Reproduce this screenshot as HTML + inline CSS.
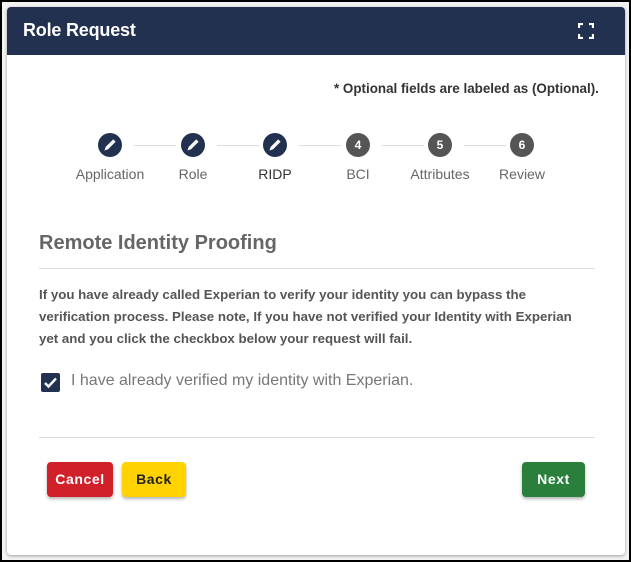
<!DOCTYPE html>
<html><head><style>
*{margin:0;padding:0;box-sizing:border-box}
body{width:631px;height:562px;background:#000;position:relative;overflow:hidden;font-family:"Liberation Sans",sans-serif}
.frame{position:absolute;left:2px;top:2px;width:627px;height:558px;background:#f3f3f3}
.card{position:absolute;left:7px;top:7px;width:618px;height:548px;background:#fff;border-radius:4px;box-shadow:0 1px 3px rgba(0,0,0,.35);overflow:hidden}
.hdr{position:absolute;left:0;top:0;width:100%;height:48px;background:#22314f}
.hdr h1{position:absolute;left:16px;top:13px;color:#fff;font-size:18px;font-weight:bold;letter-spacing:-0.2px}
.a{position:absolute;white-space:nowrap}
.c{position:absolute;width:24px;height:24px;border-radius:50%;top:126px;color:#fff;font-size:12px;font-weight:bold;text-align:center;line-height:24px}
.dk{background:#22314f}.gr{background:#555}
.ln{position:absolute;top:138px;height:1px;background:#ddd}
.lb{position:absolute;top:159px;font-size:14px;color:#666;transform:translateX(-50%)}
.btn{position:absolute;top:455px;height:35px;border-radius:4px;font-size:14px;font-weight:bold;text-align:center;line-height:35px;letter-spacing:.6px;box-shadow:0 2px 3px rgba(0,0,0,.3)}
</style></head><body>
<div class="frame"></div>
<div class="card">
 <div class="hdr"><h1>Role Request</h1>
  <svg style="position:absolute;left:571px;top:16px" width="16" height="16" viewBox="0 0 16 16" fill="none" stroke="#fff" stroke-width="2.2"><path d="M1 5V1h4M11 1h4v4M15 11v4h-4M5 15H1v-4"/></svg>
 </div>
 <div class="a" style="left:327px;top:74px;font-size:13.4px;font-weight:bold;color:#333">* Optional fields are labeled as (Optional).</div>

 <div class="ln" style="left:127px;width:42px"></div>
 <div class="ln" style="left:210px;width:42px"></div>
 <div class="ln" style="left:292px;width:42px"></div>
 <div class="ln" style="left:375px;width:42px"></div>
 <div class="ln" style="left:457px;width:42px"></div>

 <div class="c dk" style="left:91px"><svg width="24" height="24" viewBox="0 0 24 24"><path d="M6.5 17.5l1.2-3.6 7.5-7.5 2.4 2.4-7.5 7.5z" fill="#fff"/></svg></div>
 <div class="c dk" style="left:174px"><svg width="24" height="24" viewBox="0 0 24 24"><path d="M6.5 17.5l1.2-3.6 7.5-7.5 2.4 2.4-7.5 7.5z" fill="#fff"/></svg></div>
 <div class="c dk" style="left:256px"><svg width="24" height="24" viewBox="0 0 24 24"><path d="M6.5 17.5l1.2-3.6 7.5-7.5 2.4 2.4-7.5 7.5z" fill="#fff"/></svg></div>
 <div class="c gr" style="left:339px">4</div>
 <div class="c gr" style="left:421px">5</div>
 <div class="c gr" style="left:503px">6</div>

 <div class="lb" style="left:103px">Application</div>
 <div class="lb" style="left:186px">Role</div>
 <div class="lb" style="left:268px;color:#333">RIDP</div>
 <div class="lb" style="left:351px">BCI</div>
 <div class="lb" style="left:433px">Attributes</div>
 <div class="lb" style="left:515px">Review</div>

 <div class="a" style="left:32px;top:225px;font-size:20px;font-weight:bold;color:#666">Remote Identity Proofing</div>
 <div style="position:absolute;left:32px;top:261px;width:556px;height:1px;background:#ddd"></div>
 <div class="a" style="left:32px;top:277px;font-size:13.3px;font-weight:bold;color:#555;line-height:22px">If you have already called Experian to verify your identity you can bypass the<br>verification process. Please note, If you have not verified your Identity with Experian<br>yet and you click the checkbox below your request will fail.</div>

 <div style="position:absolute;left:34px;top:366px;width:19px;height:19px;background:#22314f;border-radius:2px"><svg width="19" height="19" viewBox="0 0 19 19"><path d="M4 10l3.5 3.5 7.5-8" fill="none" stroke="#fff" stroke-width="2.4"/></svg></div>
 <div class="a" style="left:64px;top:365px;font-size:16px;color:#777">I have already verified my identity with Experian.</div>

 <div style="position:absolute;left:32px;top:430px;width:556px;height:1px;background:#ddd"></div>
 <div class="btn" style="left:40px;width:66px;background:#d0202a;color:#fff">Cancel</div>
 <div class="btn" style="left:115px;width:64px;background:#ffd200;color:#222">Back</div>
 <div class="btn" style="left:515px;width:63px;background:#2a7f3d;color:#fff">Next</div>
</div>
</body></html>
